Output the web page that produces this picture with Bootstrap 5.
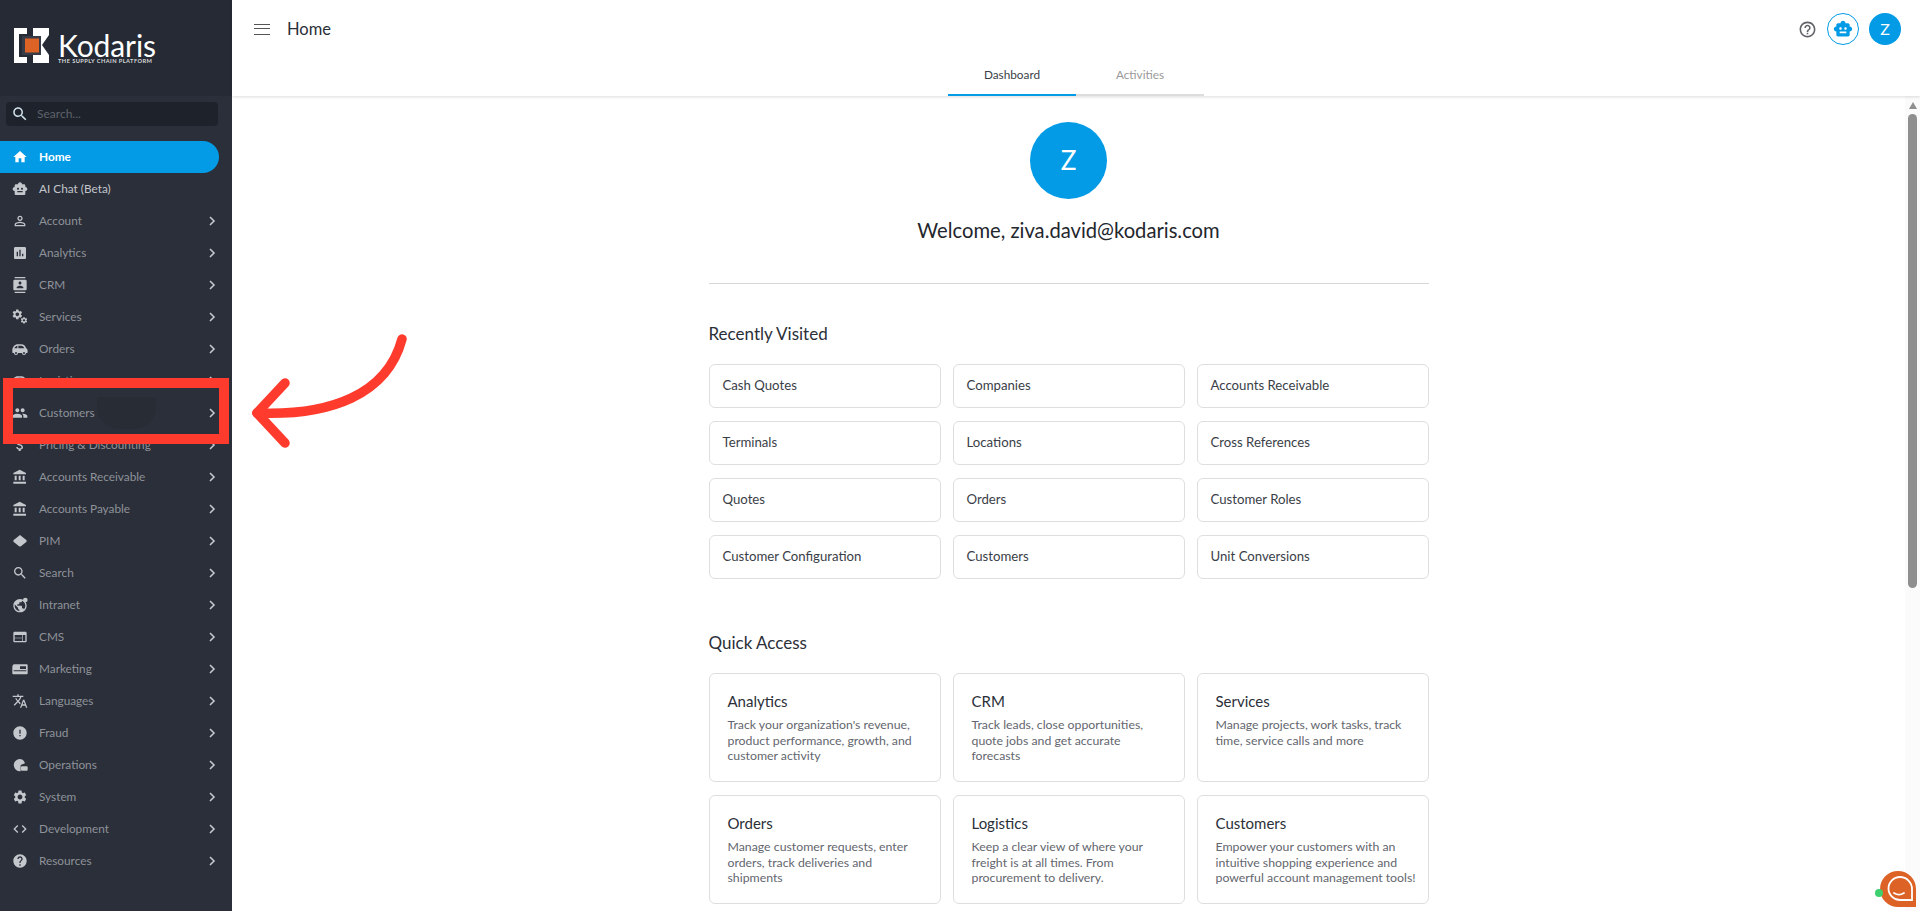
<!DOCTYPE html>
<html lang="en">
<head>
<meta charset="utf-8">
<title>Kodaris - Home</title>
<link href="https://cdn.jsdelivr.net/npm/bootstrap@5.3.0/dist/css/bootstrap.min.css" rel="stylesheet">
<style>
html,body{height:911px;overflow:hidden}
body{font-family:"Lato","Noto Sans",sans-serif;color:#2b2f38;background:#fff}
.app-shell{height:911px;overflow:hidden}
.side-panel{width:232px;flex:none;background:#2a2f3a;height:911px}
.side-brand{height:96px;background:#252a34;padding:28px 0 0 14px}
.brand-copy{margin:5px 0 0 9px}
.brand-word{font-size:30px;line-height:24px;color:#fff;letter-spacing:-.1px}
.brand-tag{font-size:5.7px;line-height:7px;color:#d8d9db;font-weight:700;letter-spacing:.42px;white-space:nowrap}
.side-search{margin:6px 14px 15px 6px;height:24px;background:#1e222a;border-radius:4px;padding-left:5px;color:#5d626c;font-size:12px}
.side-search svg{width:18px;height:18px;fill:#cfe0ea}
.side-row{height:32px;padding-left:12px;padding-right:14px;color:#8f9299;font-size:11.8px;white-space:nowrap}
.side-row .lbl{margin-bottom:1px}
.side-row .ico{width:16px;height:16px;fill:#c4c7cc;flex:none;margin-right:11px}
.side-row .chev{width:12px;height:12px;fill:none;stroke:#c4c7cc;stroke-width:1.6;margin-left:auto;flex:none}
.side-row.is-active{background:#039be5;color:#fff;font-weight:700;border-radius:0 16px 16px 0;width:219px}
.side-row.is-active .ico{fill:#fff}
.side-row.is-bright{color:#c4c6cb}
.main-area{min-width:0;height:911px;position:relative}
.top-strip{height:96px;box-shadow:0 1px 3px rgba(0,0,0,.14);background:#fff;position:relative;z-index:2}
.top-line{height:58px;padding:0 19px 0 22px}
.page-name{font-size:16.5px;color:#2b2f38;margin-left:17px}
.burger{width:16px;height:11px;border-top:1.5px solid #555;border-bottom:1.5px solid #555;position:relative}
.burger::after{content:"";position:absolute;left:0;right:0;top:3.2px;border-top:1.5px solid #555}
.round-z{width:32px;height:32px;background:#039be5;color:#fff;border-radius:50%;font-size:16px;margin-left:10px}
.round-bot{width:32px;height:32px;border:1.5px solid #039be5;border-radius:50%;background:#fff;margin-left:10px}
.round-bot svg{width:20px;height:20px;fill:#039be5}
.help-ico{width:19px;height:19px;fill:#5f6368}
.tab-line{height:38px}
.tab-item{width:128px;height:38px;font-size:11.8px;color:#999;border-bottom:2px solid #ddd;padding-bottom:2px}
.tab-item.is-on{color:#3b3f48;border-bottom-color:#039be5}
.scroll-body{height:815px;overflow:hidden}
.dash-col{width:720px;margin:0 auto;padding-top:26px}
.big-z{width:77px;height:77px;background:#039be5;color:#fff;border-radius:50%;font-size:26px}
.hello{font-size:20.2px;line-height:28px;margin-top:17px;color:#23262d}
.dash-rule{border-top:1px solid #d8d8d8;margin-top:39px;margin-bottom:38px}
.sec-name{font-size:17px;line-height:24px;color:#2b2f38;margin-bottom:18px}
.tile-row{--bs-gutter-x:12px;--bs-gutter-y:13px}
.link-tile{height:44px;border:1px solid #dedede;border-radius:6px;padding:0 13px;font-size:13.2px;color:#3a3e47;background:#fff}
.info-tile{height:109px;border:1px solid #dedede;border-radius:6px;padding:17px 18px 0;background:#fff}
.info-tile.is-roomy{padding-right:6px}
.info-title{font-size:15px;line-height:20px;color:#2b2f38;margin-bottom:6px}
.info-text{font-size:12.3px;line-height:15.5px;color:#63666e}
.gap-sec{margin-top:52px}
.fake-scroll{width:15px;flex:none;background:#fbfbfb;height:815px;padding-top:6px}
.scroll-up{width:0;height:0;border-left:4.5px solid transparent;border-right:4.5px solid transparent;border-bottom:7px solid #8f8f8f}
.scroll-thumb{width:9px;height:474px;background:#8f8f8f;border-radius:4.5px;margin-top:5px}
.red-frame{position:absolute;left:3px;top:378px;width:226px;height:66px;border:10px solid #ff3b2d;z-index:5}
.red-blot{position:absolute;left:84px;top:9px;width:59px;height:32px;background:#282c35;border-radius:0 0 22px 22px}
.red-arrow{position:absolute;left:250px;top:330px;width:170px;height:122px;z-index:5;fill:none;stroke:#ff3b2d;stroke-width:9.5;stroke-linecap:round;stroke-linejoin:round}
.chat-bubble{position:absolute;right:0;bottom:0;width:46px;height:44px;z-index:6}
</style>
</head>
<body>
<svg width="0" height="0" class="position-absolute">
<defs>
<symbol id="i-home" viewBox="0 0 24 24"><path d="M10 20v-6h4v6h5v-8h3L12 3 2 12h3v8z"/></symbol>
<symbol id="i-bot" viewBox="0 0 24 24"><path d="M20 9V7c0-1.1-.9-2-2-2h-3c0-1.66-1.34-3-3-3S9 3.34 9 5H6c-1.1 0-2 .9-2 2v2c-1.66 0-3 1.34-3 3s1.34 3 3 3v4c0 1.1.9 2 2 2h12c1.1 0 2-.9 2-2v-4c1.66 0 3-1.34 3-3s-1.34-3-3-3zM7.5 11.5c0-.83.67-1.5 1.5-1.5s1.5.67 1.5 1.5S9.83 13 9 13s-1.5-.67-1.5-1.5zM16 17H8v-2h8v2zm-1-4c-.83 0-1.5-.67-1.5-1.5S14.17 10 15 10s1.5.67 1.5 1.5S15.83 13 15 13z"/></symbol>
<symbol id="i-person" viewBox="0 0 24 24"><path d="M12 5.9c1.16 0 2.1.94 2.1 2.1s-.94 2.1-2.1 2.1S9.9 9.16 9.9 8s.94-2.1 2.1-2.1m0 9c2.97 0 6.1 1.46 6.1 2.1v1.1H5.9V17c0-.64 3.13-2.1 6.1-2.1M12 4C9.79 4 8 5.79 8 8s1.79 4 4 4 4-1.79 4-4-1.79-4-4-4zm0 9c-2.67 0-8 1.34-8 4v3h16v-3c0-2.66-5.33-4-8-4z"/></symbol>
<symbol id="i-chart" viewBox="0 0 24 24"><path d="M19 3H5c-1.1 0-2 .9-2 2v14c0 1.1.9 2 2 2h14c1.1 0 2-.9 2-2V5c0-1.1-.9-2-2-2zM9 17H7v-7h2v7zm4 0h-2V7h2v10zm4 0h-2v-4h2v4z"/></symbol>
<symbol id="i-contact" viewBox="0 0 24 24"><path d="M20 0H4v2h16V0zM4 24h16v-2H4v2zM20 4H4c-1.1 0-2 .9-2 2v12c0 1.1.9 2 2 2h16c1.1 0 2-.9 2-2V6c0-1.1-.9-2-2-2zm-8 2.75c1.24 0 2.25 1.01 2.25 2.25s-1.01 2.25-2.25 2.25S9.75 10.24 9.75 9 10.76 6.75 12 6.75zM17 17H7v-1.5c0-1.67 3.33-2.5 5-2.5s5 .83 5 2.5V17z"/></symbol>
<symbol id="i-gear" viewBox="0 0 24 24"><path d="M19.14 12.94c.04-.3.06-.61.06-.94 0-.32-.02-.64-.07-.94l2.03-1.58c.18-.14.23-.41.12-.61l-1.92-3.32c-.12-.22-.37-.29-.59-.22l-2.39.96c-.5-.38-1.03-.7-1.62-.94l-.36-2.54c-.04-.24-.24-.41-.48-.41h-3.84c-.24 0-.43.17-.47.41l-.36 2.54c-.59.24-1.13.57-1.62.94l-2.39-.96c-.22-.08-.47 0-.59.22L2.74 8.87c-.12.21-.08.47.12.61l2.03 1.58c-.05.3-.09.63-.09.94s.02.64.07.94l-2.03 1.58c-.18.14-.23.41-.12.61l1.92 3.32c.12.22.37.29.59.22l2.39-.96c.5.38 1.03.7 1.62.94l.36 2.54c.05.24.24.41.48.41h3.84c.24 0 .44-.17.47-.41l.36-2.54c.59-.24 1.13-.56 1.62-.94l2.39.96c.22.08.47 0 .59-.22l1.92-3.32c.12-.22.07-.47-.12-.61l-2.01-1.58zM12 15.6c-1.98 0-3.6-1.62-3.6-3.6s1.62-3.6 3.6-3.6 3.6 1.62 3.6 3.6-1.62 3.6-3.6 3.6z"/></symbol>
<symbol id="i-gears" viewBox="0 0 24 24"><use href="#i-gear" x="-1" y="-1" width="18" height="18"/><use href="#i-gear" x="12" y="11" width="12" height="12"/></symbol>
<symbol id="i-van" viewBox="0 0 24 24"><path fill-rule="evenodd" d="M9 5h5c3.500 0 6 2.300 7 5.500l1.500 1.500c.6.6.9 1.300.9 2.200V17a1 1 0 0 1-1 1H21a3 3 0 0 1-6 0H9a3 3 0 0 1-6 0H1.500a1 1 0 0 1-1-1v-3C.5 9 4 5 9 5zM9.500 7v4h9c-.8-2.400-2.500-4-4.500-4zM8 7.200C5.800 7.700 4.300 9 3.500 11H8zM6 16.500a1.500 1.500 0 1 0 0 3 1.500 1.500 0 0 0 0-3zm12 0a1.500 1.500 0 1 0 0 3 1.500 1.500 0 0 0 0-3z"/></symbol>
<symbol id="i-people" viewBox="0 0 24 24"><path d="M16 11c1.66 0 2.99-1.34 2.99-3S17.66 5 16 5c-1.66 0-3 1.34-3 3s1.34 3 3 3zm-8 0c1.66 0 2.99-1.34 2.99-3S9.66 5 8 5C6.34 5 5 6.34 5 8s1.34 3 3 3zm0 2c-2.33 0-7 1.17-7 3.5V19h14v-2.5c0-2.33-4.67-3.5-7-3.5zm8 0c-.29 0-.62.02-.97.05 1.16.84 1.97 1.97 1.97 3.45V19h6v-2.5c0-2.33-4.67-3.5-7-3.5z"/></symbol>
<symbol id="i-dollar" viewBox="0 0 24 24"><path d="M11.8 10.9c-2.27-.59-3-1.2-3-2.15 0-1.09 1.01-1.85 2.7-1.85 1.78 0 2.44.85 2.5 2.1h2.21c-.07-1.72-1.12-3.3-3.21-3.81V3h-3v2.16c-1.94.42-3.5 1.68-3.5 3.61 0 2.31 1.91 3.46 4.7 4.13 2.5.6 3 1.48 3 2.41 0 .69-.49 1.79-2.7 1.79-2.06 0-2.87-.92-2.98-2.1h-2.2c.12 2.19 1.76 3.42 3.68 3.83V21h3v-2.15c1.95-.37 3.5-1.5 3.5-3.55 0-2.84-2.43-3.81-4.7-4.4z"/></symbol>
<symbol id="i-bank" viewBox="0 0 24 24"><path d="M4 10v7h3v-7H4zm6 0v7h3v-7h-3zM2 22h19v-3H2v3zm14-12v7h3v-7h-3zm-4.5-9L2 6v2h19V6l-9.5-5z"/></symbol>
<symbol id="i-diamond" viewBox="0 0 24 24"><path d="M12 3.5c.5 0 1 .2 1.4.6l8 6.5c.8.7.8 2.1 0 2.8l-8 6.500c-.8.7-2 .7-2.800 0l-8-6.500c-.8-.7-.8-2.100 0-2.800l8-6.500c.4-.4.9-.6 1.400-.6z"/></symbol>
<symbol id="i-search" viewBox="0 0 24 24"><path d="M15.5 14h-.79l-.28-.27C15.41 12.59 16 11.11 16 9.5 16 5.91 13.09 3 9.5 3S3 5.91 3 9.5 5.91 16 9.5 16c1.61 0 3.09-.59 4.23-1.57l.27.28v.79l5 4.99L20.49 19l-4.99-5zm-6 0C7.01 14 5 11.99 5 9.5S7.01 5 9.5 5 14 7.01 14 9.5 11.99 14 9.5 14z"/></symbol>
<symbol id="i-globe" viewBox="0 0 24 24"><path d="M12 3C6.480 3 2 7.480 2 13s4.480 10 10 10 10-4.480 10-10S17.520 3 12 3zm-1 17.930c-3.950-.49-7-3.850-7-7.930 0-.62.08-1.210.21-1.790L9 16v1c0 1.100.9 2 2 2v1.930zm6.900-2.540c-.26-.81-1-1.390-1.900-1.390h-1v-3c0-.55-.45-1-1-1H8v-2h2c.55 0 1-.45 1-1V8h2c1.100 0 2-.9 2-2v-.41c2.930 1.190 5 4.060 5 7.410 0 2.080-.8 3.970-2.100 5.390z"/><circle cx="20" cy="4.500" r="3.500"/></symbol>
<symbol id="i-web" viewBox="0 0 24 24"><path d="M20 4H4c-1.100 0-1.990.9-1.990 2L2 18c0 1.100.9 2 2 2h16c1.100 0 2-.9 2-2V6c0-1.100-.9-2-2-2zm-5 14H4v-4h11v4zm0-5H4V9h11v4zm5 5h-4V9h4v9z"/></symbol>
<symbol id="i-promo" viewBox="0 0 24 24"><path fill-rule="evenodd" d="M3 5h19a1.500 1.500 0 0 1 1.500 1.500v12A1.500 1.500 0 0 1 22 20H2a1.500 1.500 0 0 1-1.500-1.500V9C.5 7 2 5 3 5zM12 8v4h9V8zM2.500 14v1.500h19V14z"/></symbol>
<symbol id="i-lang" viewBox="0 0 24 24"><path d="M12.870 15.070l-2.540-2.510.03-.03c1.740-1.940 2.980-4.170 3.710-6.530H17V4h-7V2H8v2H1v1.990h11.170C11.500 7.920 10.440 9.750 9 11.350 8.070 10.320 7.300 9.190 6.690 8h-2c.73 1.630 1.730 3.170 2.980 4.560l-5.090 5.020L4 19l5-5 3.110 3.110.76-2.040zM18.500 10h-2L12 22h2l1.120-3h4.750L21 22h2l-4.500-12zm-2.620 7l1.620-4.330L19.120 17h-3.240z"/></symbol>
<symbol id="i-alert" viewBox="0 0 24 24"><path d="M12 2C6.480 2 2 6.480 2 12s4.480 10 10 10 10-4.480 10-10S17.520 2 12 2zm1 15h-2v-2h2v2zm0-4h-2V7h2v6z"/></symbol>
<symbol id="i-ops" viewBox="0 0 24 24"><path fill-rule="evenodd" d="M11 3a9 9 0 0 1 8.500 6.500L13 12v9.500A9 9 0 1 1 11 3zM15 14h7a1.500 1.500 0 0 1 1.500 1.500V19a1.500 1.500 0 0 1-1.500 1.500h-7a1.500 1.500 0 0 1-1.500-1.500v-3.500A1.500 1.500 0 0 1 15 14z"/></symbol>
<symbol id="i-code" viewBox="0 0 24 24"><path d="M9.400 16.600L4.800 12l4.600-4.600L8 6l-6 6 6 6 1.400-1.400zm5.200 0l4.600-4.600-4.600-4.600L16 6l6 6-6 6-1.400-1.400z"/></symbol>
<symbol id="i-help" viewBox="0 0 24 24"><path d="M12 2C6.480 2 2 6.480 2 12s4.480 10 10 10 10-4.480 10-10S17.520 2 12 2zm1 17h-2v-2h2v2zm2.070-7.750l-.9.920C13.450 12.900 13 13.500 13 15h-2v-.5c0-1.100.45-2.100 1.170-2.830l1.240-1.260c.37-.36.590-.86.590-1.410 0-1.100-.9-2-2-2s-2 .9-2 2H8c0-2.210 1.790-4 4-4s4 1.790 4 4c0 .88-.36 1.680-.93 2.250z"/></symbol>
<symbol id="i-help-o" viewBox="0 0 24 24"><path d="M11 18h2v-2h-2v2zm1-16C6.480 2 2 6.480 2 12s4.480 10 10 10 10-4.480 10-10S17.520 2 12 2zm0 18c-4.410 0-8-3.590-8-8s3.590-8 8-8 8 3.590 8 8-3.590 8-8 8zm0-14c-2.210 0-4 1.790-4 4h2c0-1.100.9-2 2-2s2 .9 2 2c0 2-3 1.750-3 5h2c0-2.250 3-2.500 3-5 0-2.210-1.790-4-4-4z"/></symbol>
<symbol id="i-chev" viewBox="0 0 12 12"><path d="M4 2l4 4-4 4"/></symbol>
</defs>
</svg>

<div class="app-shell d-flex">
  <aside class="side-panel">
    <div class="side-brand d-flex">
      <svg width="35" height="35" viewBox="0 0 35 35" class="flex-shrink-0">
        <path fill="#fff" d="M0 0h13v6H5v23h8v6H0z"/>
        <path fill="#fff" d="M19 0h16v7l-7 10 7 10v8H19z"/>
        <rect x="8" y="8" width="19" height="19" fill="#363b47"/>
        <rect x="11" y="10.500" width="14" height="14" fill="#dd6226"/>
      </svg>
      <div class="brand-copy">
        <div class="brand-word">Kodaris</div>
        <div class="brand-tag">THE SUPPLY CHAIN PLATFORM</div>
      </div>
    </div>
    <div class="side-search d-flex align-items-center gap-2"><svg><use href="#i-search"/></svg><span>Search...</span></div>
    <nav>
      <div class="side-row is-active d-flex align-items-center"><svg class="ico"><use href="#i-home"/></svg><span class="lbl">Home</span></div>
      <div class="side-row is-bright d-flex align-items-center"><svg class="ico"><use href="#i-bot"/></svg><span class="lbl">AI Chat (Beta)</span></div>
      <div class="side-row d-flex align-items-center"><svg class="ico"><use href="#i-person"/></svg><span class="lbl">Account</span><svg class="chev"><use href="#i-chev"/></svg></div>
      <div class="side-row d-flex align-items-center"><svg class="ico"><use href="#i-chart"/></svg><span class="lbl">Analytics</span><svg class="chev"><use href="#i-chev"/></svg></div>
      <div class="side-row d-flex align-items-center"><svg class="ico"><use href="#i-contact"/></svg><span class="lbl">CRM</span><svg class="chev"><use href="#i-chev"/></svg></div>
      <div class="side-row d-flex align-items-center"><svg class="ico"><use href="#i-gears"/></svg><span class="lbl">Services</span><svg class="chev"><use href="#i-chev"/></svg></div>
      <div class="side-row d-flex align-items-center"><svg class="ico"><use href="#i-van"/></svg><span class="lbl">Orders</span><svg class="chev"><use href="#i-chev"/></svg></div>
      <div class="side-row d-flex align-items-center"><svg class="ico"><use href="#i-van"/></svg><span class="lbl">Logistics</span><svg class="chev"><use href="#i-chev"/></svg></div>
      <div class="side-row d-flex align-items-center"><svg class="ico"><use href="#i-people"/></svg><span class="lbl">Customers</span><svg class="chev"><use href="#i-chev"/></svg></div>
      <div class="side-row d-flex align-items-center"><svg class="ico"><use href="#i-dollar"/></svg><span class="lbl">Pricing &amp; Discounting</span><svg class="chev"><use href="#i-chev"/></svg></div>
      <div class="side-row d-flex align-items-center"><svg class="ico"><use href="#i-bank"/></svg><span class="lbl">Accounts Receivable</span><svg class="chev"><use href="#i-chev"/></svg></div>
      <div class="side-row d-flex align-items-center"><svg class="ico"><use href="#i-bank"/></svg><span class="lbl">Accounts Payable</span><svg class="chev"><use href="#i-chev"/></svg></div>
      <div class="side-row d-flex align-items-center"><svg class="ico"><use href="#i-diamond"/></svg><span class="lbl">PIM</span><svg class="chev"><use href="#i-chev"/></svg></div>
      <div class="side-row d-flex align-items-center"><svg class="ico"><use href="#i-search"/></svg><span class="lbl">Search</span><svg class="chev"><use href="#i-chev"/></svg></div>
      <div class="side-row d-flex align-items-center"><svg class="ico"><use href="#i-globe"/></svg><span class="lbl">Intranet</span><svg class="chev"><use href="#i-chev"/></svg></div>
      <div class="side-row d-flex align-items-center"><svg class="ico"><use href="#i-web"/></svg><span class="lbl">CMS</span><svg class="chev"><use href="#i-chev"/></svg></div>
      <div class="side-row d-flex align-items-center"><svg class="ico"><use href="#i-promo"/></svg><span class="lbl">Marketing</span><svg class="chev"><use href="#i-chev"/></svg></div>
      <div class="side-row d-flex align-items-center"><svg class="ico"><use href="#i-lang"/></svg><span class="lbl">Languages</span><svg class="chev"><use href="#i-chev"/></svg></div>
      <div class="side-row d-flex align-items-center"><svg class="ico"><use href="#i-alert"/></svg><span class="lbl">Fraud</span><svg class="chev"><use href="#i-chev"/></svg></div>
      <div class="side-row d-flex align-items-center"><svg class="ico"><use href="#i-ops"/></svg><span class="lbl">Operations</span><svg class="chev"><use href="#i-chev"/></svg></div>
      <div class="side-row d-flex align-items-center"><svg class="ico"><use href="#i-gear"/></svg><span class="lbl">System</span><svg class="chev"><use href="#i-chev"/></svg></div>
      <div class="side-row d-flex align-items-center"><svg class="ico"><use href="#i-code"/></svg><span class="lbl">Development</span><svg class="chev"><use href="#i-chev"/></svg></div>
      <div class="side-row d-flex align-items-center"><svg class="ico"><use href="#i-help"/></svg><span class="lbl">Resources</span><svg class="chev"><use href="#i-chev"/></svg></div>
    </nav>
  </aside>

  <main class="main-area flex-grow-1 d-flex flex-column">
    <header class="top-strip">
      <div class="top-line d-flex align-items-center">
        <div class="burger"></div>
        <div class="page-name">Home</div>
        <div class="ms-auto d-flex align-items-center">
          <svg class="help-ico"><use href="#i-help-o"/></svg>
          <div class="round-bot d-flex align-items-center justify-content-center"><svg><use href="#i-bot"/></svg></div>
          <div class="round-z d-flex align-items-center justify-content-center">Z</div>
        </div>
      </div>
      <div class="tab-line d-flex justify-content-center">
        <div class="tab-item is-on d-flex align-items-center justify-content-center">Dashboard</div>
        <div class="tab-item d-flex align-items-center justify-content-center">Activities</div>
      </div>
    </header>
    <div class="d-flex flex-grow-1">
      <div class="scroll-body flex-grow-1">
        <div class="dash-col">
          <div class="d-flex flex-column align-items-center">
            <div class="big-z d-flex align-items-center justify-content-center">Z</div>
            <div class="hello">Welcome, ziva.david@kodaris.com</div>
          </div>
          <div class="dash-rule"></div>
          <div class="sec-name">Recently Visited</div>
          <div class="row tile-row">
            <div class="col-4"><div class="link-tile d-flex align-items-center">Cash Quotes</div></div>
            <div class="col-4"><div class="link-tile d-flex align-items-center">Companies</div></div>
            <div class="col-4"><div class="link-tile d-flex align-items-center">Accounts Receivable</div></div>
            <div class="col-4"><div class="link-tile d-flex align-items-center">Terminals</div></div>
            <div class="col-4"><div class="link-tile d-flex align-items-center">Locations</div></div>
            <div class="col-4"><div class="link-tile d-flex align-items-center">Cross References</div></div>
            <div class="col-4"><div class="link-tile d-flex align-items-center">Quotes</div></div>
            <div class="col-4"><div class="link-tile d-flex align-items-center">Orders</div></div>
            <div class="col-4"><div class="link-tile d-flex align-items-center">Customer Roles</div></div>
            <div class="col-4"><div class="link-tile d-flex align-items-center">Customer Configuration</div></div>
            <div class="col-4"><div class="link-tile d-flex align-items-center">Customers</div></div>
            <div class="col-4"><div class="link-tile d-flex align-items-center">Unit Conversions</div></div>
          </div>
          <div class="sec-name gap-sec">Quick Access</div>
          <div class="row tile-row">
            <div class="col-4"><div class="info-tile"><div class="info-title">Analytics</div><div class="info-text">Track your organization's revenue, product performance, growth, and customer activity</div></div></div>
            <div class="col-4"><div class="info-tile"><div class="info-title">CRM</div><div class="info-text">Track leads, close opportunities, quote jobs and get accurate forecasts</div></div></div>
            <div class="col-4"><div class="info-tile"><div class="info-title">Services</div><div class="info-text">Manage projects, work tasks, track time, service calls and more</div></div></div>
            <div class="col-4"><div class="info-tile"><div class="info-title">Orders</div><div class="info-text">Manage customer requests, enter orders, track deliveries and shipments</div></div></div>
            <div class="col-4"><div class="info-tile"><div class="info-title">Logistics</div><div class="info-text">Keep a clear view of where your freight is at all times. From procurement to delivery.</div></div></div>
            <div class="col-4"><div class="info-tile is-roomy"><div class="info-title">Customers</div><div class="info-text">Empower your customers with an intuitive shopping experience and powerful account management tools!</div></div></div>
          </div>
        </div>
      </div>
      <div class="fake-scroll d-flex flex-column align-items-center">
        <div class="scroll-up"></div>
        <div class="scroll-thumb"></div>
      </div>
    </div>
  </main>
</div>

<div class="red-frame"><div class="red-blot"></div></div>
<svg class="red-arrow" viewBox="0 0 170 122"><path d="M152 9C137 65 80 86 7 83"/><path d="M35 53L7 83 35 113"/></svg>
<svg class="chat-bubble" viewBox="0 0 46 44">
  <path fill="#dd6226" d="M24 4a18 18 0 0 1 18 18v18H24a18 18 0 0 1 0-36z"/>
  <path fill="none" stroke="#fff" stroke-width="1.800" d="M26 10a12 12 0 0 1 12 12v11H26a11.500 11.500 0 0 1 0-23z"/>
  <path fill="none" stroke="#fff" stroke-width="1.800" stroke-linecap="round" d="M20 26c3 2 7 2 10 0"/>
  <circle cx="5" cy="26" r="4" fill="#3ecf6e"/>
</svg>
<script src="https://cdn.jsdelivr.net/npm/bootstrap@5.3.0/dist/js/bootstrap.bundle.min.js"></script>
</body>
</html>
